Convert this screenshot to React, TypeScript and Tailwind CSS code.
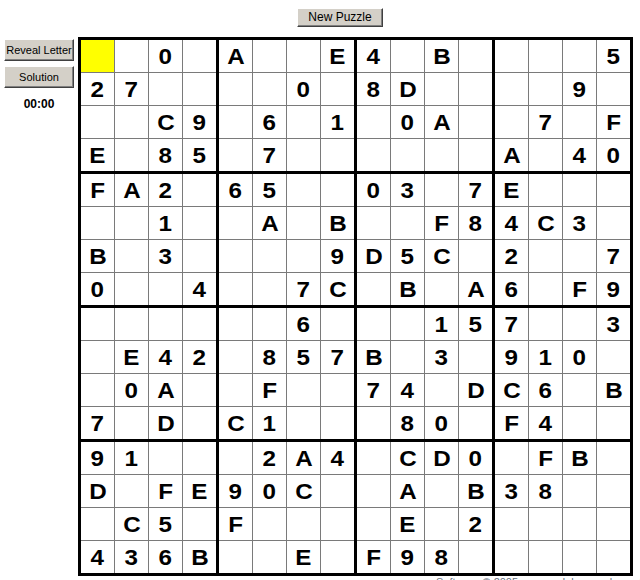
const rows: string[] = [
  "  0 A  E4 B    5",
  "27    0 8D    9 ",
  "  C9 6 1 0A  7 F",
  "E 85 7      A 40",
  "FA2 65  03 7E   ",
  "  1  A B  F84C3 ",
  "B 3    9D5C 2  7",
  "0  4  7C B A6 F9",
  "      6   157  3",
  " E42 857B 3 910 ",
  " 0A  F  74 DC6 B",
  "7 D C1   80 F4  ",
  "91   2A4 CD0 FB ",
  "D FE90C  A B38  ",
  " C5 F    E 2    ",
  "436B  E F98     ",
];

function WinButton({ label, className }: { label: string; className?: string }) {
  return (
    <button
      className={`bg-[#d4d0c8] text-black text-[11px] leading-none whitespace-nowrap px-0 border border-t-white border-l-white border-r-[#404040] border-b-[#404040] shadow-[inset_-1px_-1px_0_#808080] ${className}`}
      style={{ fontFamily: '"Liberation Sans", Arial, sans-serif' }}
    >
      {label}
    </button>
  );
}

function Block({ br, bc }: { br: number; bc: number }) {
  const cells = [];
  for (let r = 0; r < 4; r++) {
    for (let c = 0; c < 4; c++) {
      const row = br * 4 + r;
      const col = bc * 4 + c;
      const v = rows[row][col].trim();
      const selected = row === 0 && col === 0;
      cells.push(
        <div
          key={`${r}-${c}`}
          className={`${selected ? "bg-[#ffff00]" : "bg-white"} flex items-center justify-center text-[22px] font-bold text-black`}
        >
          <span className="inline-block scale-x-110">{v}</span>
        </div>
      );
    }
  }
  return (
    <div className="grid grid-cols-[repeat(4,33px)] grid-rows-[repeat(4,32px)] gap-px bg-[#7a7a7a]">
      {cells}
    </div>
  );
}

export default function App() {
  const blocks = [];
  for (let br = 0; br < 4; br++) {
    for (let bc = 0; bc < 4; bc++) {
      blocks.push(<Block key={`${br}-${bc}`} br={br} bc={bc} />);
    }
  }

  return (
    <div
      className="w-[640px] h-[580px] overflow-hidden bg-white flex flex-col"
      style={{ fontFamily: '"Liberation Sans", Arial, sans-serif' }}
    >
      <div className="h-[37px] shrink-0 pt-1 pl-[297px]">
        <WinButton label="New Puzzle" className="w-[86px] h-[19px] text-[12px]" />
      </div>
      <div className="flex shrink-0">
        <div className="w-[78px] flex flex-col items-start pl-1 pt-[2px]">
          <WinButton label="Reveal Letter" className="w-[70px] h-[22px]" />
          <WinButton label="Solution" className="w-[70px] h-[22px] mt-[5px]" />
          <div className="w-[70px] text-center text-[12px] font-bold mt-[7px]">00:00</div>
        </div>
        <div className="border-[3px] border-black bg-black grid grid-cols-4 gap-[3px] w-max">
          {blocks}
        </div>
      </div>
      <div className="shrink-0 pl-[436px] pt-px text-[11px] text-gray-500 leading-none whitespace-nowrap">Software © 2005 www.sudoku-puzzles.net</div>
    </div>
  );
}
